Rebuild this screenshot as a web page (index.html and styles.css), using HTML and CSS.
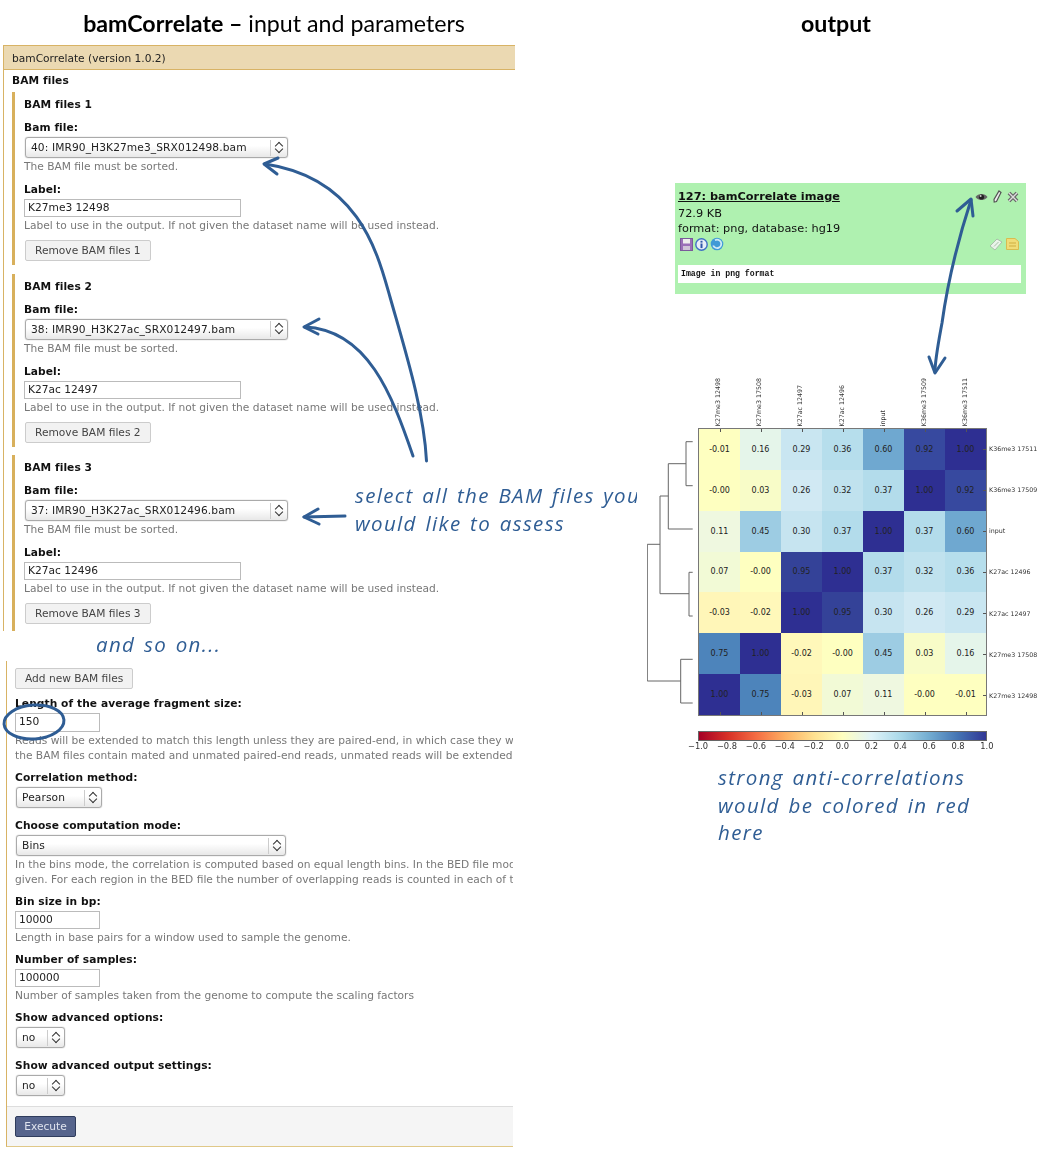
FILE: index.html
```html
<!DOCTYPE html>
<html lang="en">
<head>
  <meta charset="UTF-8">
  <title>bamCorrelate</title>
  <link rel="stylesheet" href="styles.css">
</head>
<body>
<div class="page">

  <div class="left">
    <h1 class="title"><b>bamCorrelate –</b> input and parameters</h1>

    <div class="panel panel-top">
      <div class="panel-head">bamCorrelate (version 1.0.2)</div>
      <div class="section-title">BAM files</div>

      <div class="repeat">
        <div class="repeat-title">BAM files 1</div>
        <label>Bam file:</label>
        <div class="select wide"><span>40: IMR90_H3K27me3_SRX012498.bam</span><i class="spin"></i></div>
        <div class="help">The BAM file must be sorted.</div>
        <label>Label:</label>
        <div class="textbox long">K27me3 12498</div>
        <div class="help">Label to use in the output. If not given the dataset name will be used instead.</div>
        <div class="btn">Remove BAM files 1</div>
      </div>

      <div class="repeat">
        <div class="repeat-title">BAM files 2</div>
        <label>Bam file:</label>
        <div class="select wide"><span>38: IMR90_H3K27ac_SRX012497.bam</span><i class="spin"></i></div>
        <div class="help">The BAM file must be sorted.</div>
        <label>Label:</label>
        <div class="textbox long">K27ac 12497</div>
        <div class="help">Label to use in the output. If not given the dataset name will be used instead.</div>
        <div class="btn">Remove BAM files 2</div>
      </div>

      <div class="repeat">
        <div class="repeat-title">BAM files 3</div>
        <label>Bam file:</label>
        <div class="select wide"><span>37: IMR90_H3K27ac_SRX012496.bam</span><i class="spin"></i></div>
        <div class="help">The BAM file must be sorted.</div>
        <label>Label:</label>
        <div class="textbox long">K27ac 12496</div>
        <div class="help">Label to use in the output. If not given the dataset name will be used instead.</div>
        <div class="btn">Remove BAM files 3</div>
      </div>
    </div>

    <div class="note and-so-on">and so on...</div>

    <div class="panel panel-bottom">
      <div class="fields">
        <div class="btn">Add new BAM files</div>

        <label>Length of the average fragment size:</label>
        <div class="textbox short tall">150</div>
        <div class="help">Reads will be extended to match this length unless they are paired-end, in which case they will be extended to match the fragment size.<br>the BAM files contain mated and unmated paired-end reads, unmated reads will be extended to match this length as well as the others.</div>

        <label>Correlation method:</label>
        <div class="select method"><span>Pearson</span><i class="spin"></i></div>

        <label>Choose computation mode:</label>
        <div class="select mode"><span>Bins</span><i class="spin"></i></div>
        <div class="help">In the bins mode, the correlation is computed based on equal length bins. In the BED file mode, regions are<br>given. For each region in the BED file the number of overlapping reads is counted in each of the BAM files given.</div>

        <label>Bin size in bp:</label>
        <div class="textbox short">10000</div>
        <div class="help">Length in base pairs for a window used to sample the genome.</div>

        <label>Number of samples:</label>
        <div class="textbox short">100000</div>
        <div class="help">Number of samples taken from the genome to compute the scaling factors</div>

        <label>Show advanced options:</label>
        <div class="select yesno"><span>no</span><i class="spin"></i></div>

        <label>Show advanced output settings:</label>
        <div class="select yesno"><span>no</span><i class="spin"></i></div>
      </div>
      <div class="panel-foot"><div class="execute">Execute</div></div>
    </div>
  </div>

  <div class="right">
    <h1 class="title"><b>output</b></h1>

    <div class="dataset">
      <div class="ds-top">
        <a class="ds-name">127: bamCorrelate image</a>
        <div class="ds-icons">
          <svg width="13" height="10" viewBox="0 0 13 10"><path d="M0.5 5C3 1 10 1 12.5 5C10 9 3 9 0.5 5Z" fill="#666"/><circle cx="6.5" cy="5" r="2.6" fill="#222"/><circle cx="5.6" cy="4" r="1" fill="#ccc"/></svg>
          <svg width="9" height="13" viewBox="0 0 9 13"><path d="M6 1L8 2.5L3.5 11.5L1.2 12L1 9.5Z" fill="#eee" stroke="#555" stroke-width="1.2"/></svg>
          <svg width="12" height="12" viewBox="0 0 12 12"><path d="M2 2L10 10M10 2L2 10" stroke="#666" stroke-width="3.8"/><path d="M2 2L10 10M10 2L2 10" stroke="#ddd" stroke-width="1.4"/></svg>
        </div>
      </div>
      <div class="ds-line">72.9 KB</div>
      <div class="ds-line">format: png, database: hg19</div>
      <div class="ds-actions">
        <div class="ds-icons tight">
          <svg width="13" height="13" viewBox="0 0 13 13"><rect x="0.5" y="0.5" width="12" height="12" fill="#9a6fb8" stroke="#7a5a9a"/><rect x="3" y="1" width="7" height="4.5" fill="#eee"/><rect x="3" y="8" width="7" height="4" fill="#cfc4d8"/></svg>
          <svg width="13" height="13" viewBox="0 0 13 13"><circle cx="6.5" cy="6.5" r="5.7" fill="#e8eef8" stroke="#3f6fc4" stroke-width="1.4"/><rect x="5.5" y="5.5" width="2" height="4.6" fill="#2f55a8"/><rect x="5.5" y="2.8" width="2" height="1.8" fill="#2f55a8"/></svg>
          <svg width="14" height="14" viewBox="0 0 14 14"><circle cx="7" cy="7" r="6.3" fill="#3f9ad6"/><path d="M5 3.2A4.2 4.2 0 1 1 3.2 8.5" fill="none" stroke="#cfeaf5" stroke-width="1.8"/></svg>
        </div>
        <div class="ds-icons notes">
          <svg width="14" height="13" viewBox="0 0 14 13"><path d="M1 8L8 1L13 4L6 12Z" fill="#eaf4ea" stroke="#a9c0a9"/><path d="M5 8.5L9.5 4" stroke="#a9c0a9"/></svg>
          <svg width="13" height="12" viewBox="0 0 13 12"><path d="M0.5 0.5H9L12.5 3.5V11.5H0.5Z" fill="#f0dc78" stroke="#d8bc50"/><path d="M3 5H10M3 8H10" stroke="#cfae40"/></svg>
        </div>
      </div>
      <div class="ds-peek">Image in png format</div>
    </div>

    <div class="plot">
      <div class="col-labels">
        <span>K27me3 12498</span><span>K27me3 17508</span><span>K27ac 12497</span><span>K27ac 12496</span><span>input</span><span>K36me3 17509</span><span>K36me3 17511</span>
      </div>
      <div class="plot-row">
        <svg class="dendro" width="51" height="288" viewBox="647 428 51 288">
          <path d="M692.7 441.7H686V485.7H692.7M686 463.7H668.3V529H692.7M668.3 496H660V593.7M692.7 572.3H689V616H692.7M689 593.7H660M660 544.3H647.3V681H680.7M692.7 659.3H680.7V703H692.7" fill="none" stroke="#666" stroke-width="1"/>
        </svg>
        <div class="heatmap">
          <div class="c v-01">-0.01</div><div class="c v16">0.16</div><div class="c v29">0.29</div><div class="c v36">0.36</div><div class="c v60">0.60</div><div class="c v92">0.92</div><div class="c v100">1.00</div>
          <div class="c v00">-0.00</div><div class="c v03">0.03</div><div class="c v26">0.26</div><div class="c v32">0.32</div><div class="c v37">0.37</div><div class="c v100">1.00</div><div class="c v92">0.92</div>
          <div class="c v11">0.11</div><div class="c v45">0.45</div><div class="c v30">0.30</div><div class="c v37">0.37</div><div class="c v100">1.00</div><div class="c v37">0.37</div><div class="c v60">0.60</div>
          <div class="c v07">0.07</div><div class="c v00">-0.00</div><div class="c v95">0.95</div><div class="c v100">1.00</div><div class="c v37">0.37</div><div class="c v32">0.32</div><div class="c v36">0.36</div>
          <div class="c v-03">-0.03</div><div class="c v-02">-0.02</div><div class="c v100">1.00</div><div class="c v95">0.95</div><div class="c v30">0.30</div><div class="c v26">0.26</div><div class="c v29">0.29</div>
          <div class="c v75">0.75</div><div class="c v100">1.00</div><div class="c v-02">-0.02</div><div class="c v00">-0.00</div><div class="c v45">0.45</div><div class="c v03">0.03</div><div class="c v16">0.16</div>
          <div class="c v100">1.00</div><div class="c v75">0.75</div><div class="c v-03">-0.03</div><div class="c v07">0.07</div><div class="c v11">0.11</div><div class="c v00">-0.00</div><div class="c v-01">-0.01</div>
        </div>
        <div class="row-labels">
          <span>K36me3 17511</span><span>K36me3 17509</span><span>input</span><span>K27ac 12496</span><span>K27ac 12497</span><span>K27me3 17508</span><span>K27me3 12498</span>
        </div>
      </div>
      <div class="colorbar"></div>
      <div class="scale">
        <span>−1.0</span><span>−0.8</span><span>−0.6</span><span>−0.4</span><span>−0.2</span><span>0.0</span><span>0.2</span><span>0.4</span><span>0.6</span><span>0.8</span><span>1.0</span>
      </div>
    </div>

    <div class="note red-note">strong anti-correlations<br>would be colored in red<br>here</div>
  </div>

  <div class="note select-note">select all the BAM files you<br>would like to assess</div>

  <svg class="arrows" width="1053" height="1152" viewBox="0 0 1053 1152">
    <g fill="none" stroke="#2f5d94" stroke-width="3" stroke-linecap="round" stroke-linejoin="round">
      <path d="M426.5 461C424 410 405 350 390 297C378 255 360 178 265 164"/>
      <path d="M278 158L264 164L277 174"/>
      <path d="M413 456C392 395 368 330 305 327"/>
      <path d="M319 319L304 327L318 334"/>
      <path d="M345 516L304 517"/>
      <path d="M318 509L304 517L319 524"/>
      <path d="M971 200C958 240 948 280 942 323C938 345 935 360 935 372"/>
      <path d="M957 211L971 199L973 216"/>
      <path d="M929 357L935 373L945 358"/>
      <ellipse cx="34" cy="722" rx="30" ry="17" transform="rotate(-4 34 722)"/>
    </g>
  </svg>
</div>
</body>
</html>
```

FILE: styles.css
```css
* {
  box-sizing: border-box;
}
body {
  margin: 0;
  background-color: #fff;
  color: #111;
  font-family: "DejaVu Sans", sans-serif;
  font-size: 10.65px;
}
.page {
  position: relative;
  width: 1053px;
  height: 1152px;
  overflow: hidden;
  display: flex;
  filter: blur(0.3px);
}
.title {
  margin: 0;
  height: 45px;
  padding-top: 9px;
  text-align: center;
  font-family: Lato, "Open Sans", sans-serif;
  font-size: 23.2px;
  line-height: 28px;
  font-weight: 400;
  color: #000;
}
.left {
  width: 512px;
  margin-left: 3px;
  flex: none;
}
.right {
  width: 400px;
  margin-left: 121px;
  flex: none;
}
.left .title {
  padding-left: 30px;
}

/* tool form */
.panel {
  overflow: hidden;
  white-space: nowrap;
  border-left: 1px solid #d8b365;
}
.panel-top {
  height: 586px;
  border-top: 1px solid #d8b365;
}
.panel-head {
  height: 24px;
  padding: 6px 8px 0;
  background-color: #ebd9b2;
  border-bottom: 1px solid #d8b365;
  color: #222;
}
.section-title {
  height: 22px;
  padding: 4px 8px 0;
  line-height: 13px;
  font-weight: bold;
  letter-spacing: 0.08px;
}
.repeat {
  height: 173px;
  margin-left: 8px;
  margin-bottom: 8.5px;
  padding: 6px 0 0 9px;
  border-left: 3px solid #d8b05c;
}
.repeat:last-child {
  height: 176px;
  margin-bottom: 0;
}
.repeat-title {
  height: 13px;
  margin-bottom: 10px;
  line-height: 13px;
  font-weight: bold;
  letter-spacing: 0.08px;
}
label {
  display: block;
  font-weight: bold;
  line-height: 13px;
  margin-bottom: 3px;
  letter-spacing: 0.08px;
}
.select {
  display: flex;
  align-items: center;
  justify-content: space-between;
  height: 21px;
  padding-left: 5px;
  background: linear-gradient(#fff, #fff 40%, #e8e8e8);
  border: 1px solid #aaa;
  border-radius: 3px;
  box-shadow: 0 0 1px #888;
}
.select span {
  color: #222;
  letter-spacing: 0.1px;
}
.spin {
  position: relative;
  width: 17px;
  height: 16px;
  flex: none;
  border-left: 1px solid #ccc;
}
.spin::before,
.spin::after {
  content: "";
  position: absolute;
  left: 5px;
  width: 5px;
  height: 5px;
  border: solid #333;
  border-width: 1px 0 0 1px;
}
.spin::before {
  top: 3px;
  transform: rotate(45deg);
}
.spin::after {
  top: 6px;
  transform: rotate(225deg);
}
.wide {
  width: 263px;
  margin-left: 1px;
}
.method {
  width: 86px;
  margin-left: 1px;
}
.mode {
  width: 270px;
  margin-left: 1px;
}
.yesno {
  width: 49px;
  margin-left: 1px;
}
.help {
  margin-top: 1px;
  margin-bottom: 9px;
  color: #777;
  line-height: 15px;
}
.textbox {
  height: 18px;
  padding-left: 3px;
  line-height: 16px;
  border: 1px solid #bbb;
  color: #222;
}
.tall {
  height: 19px;
}
.long {
  width: 217px;
}
.short {
  width: 85px;
}
.btn {
  display: inline-block;
  height: 21px;
  padding: 0 9px;
  line-height: 19px;
  background-color: #f2f2f2;
  border: 1px solid #ccc;
  border-radius: 2px;
  color: #444;
}
.repeat .btn {
  display: block;
  width: fit-content;
  margin-top: -2px;
  margin-left: 1px;
}
.panel-bottom {
  width: 507px;
  height: 486px;
  margin-left: 3px;
  border-bottom: 1px solid #e0c888;
}
.fields {
  height: 445px;
  padding: 7px 8px 0;
}
.fields label {
  margin-top: 8px;
}
.fields .select + label {
  margin-top: 11px;
}
.fields .help {
  margin-bottom: 8px;
}
.fields .help + label {
  margin-top: 0;
}
.panel-foot {
  height: 40px;
  padding-top: 9px;
  padding-left: 8px;
  background-color: #f5f5f5;
  border-top: 1px solid #ddd;
}
.execute {
  width: 61px;
  height: 21px;
  text-align: center;
  line-height: 19px;
  color: #dfe3ee;
  background-color: #56648c;
  border: 1px solid #2f3c5c;
  border-radius: 2px;
}

/* handwritten notes */
.note {
  font-family: "Open Sans", sans-serif;
  font-style: italic;
  font-weight: 400;
  font-size: 20.5px;
  letter-spacing: 1.35px;
  word-spacing: 2px;
  color: #2f5d94;
  white-space: nowrap;
}
.and-so-on {
  height: 30px;
  padding: 0 0 0 93px;
  line-height: 27px;
}
.select-note {
  position: absolute;
  left: 355px;
  top: 481px;
  width: 282px;
  overflow: hidden;
  line-height: 28px;
}
.red-note {
  margin: -5px 0 0 82px;
  line-height: 27.5px;
}

/* dataset box */
.dataset {
  width: 351px;
  height: 111px;
  margin-top: 138px;
  margin-left: 39px;
  padding: 6px 5px 0 3px;
  background-color: #aff1b0;
  font-size: 11.3px;
  line-height: 15px;
}
.ds-top,
.ds-actions {
  display: flex;
  justify-content: space-between;
  align-items: center;
}
.ds-top {
  margin-bottom: 2px;
}
.ds-name {
  font-weight: bold;
  text-decoration: underline;
  color: #111;
}
.ds-icons {
  display: flex;
  align-items: center;
  gap: 5px;
  padding-right: 2px;
}
.ds-icons.tight {
  gap: 2px;
  padding: 0 0 0 2px;
}
.ds-icons.notes {
  gap: 3px;
}
.ds-actions {
  height: 16px;
}
.ds-peek {
  margin-top: 13px;
  height: 18px;
  width: 343px;
  padding-left: 3px;
  background-color: #fff;
  font-family: "Liberation Mono", monospace;
  font-size: 8.2px;
  font-weight: bold;
  line-height: 17px;
}

/* heatmap */
.plot {
  margin-top: 80px;
  margin-left: 11px;
  width: 400px;
}
.col-labels {
  display: grid;
  grid-template-columns: repeat(7, 41.2px);
  height: 54px;
  margin-left: 50px;
  font-size: 6.3px;
  color: #333;
}
.col-labels span {
  justify-self: center;
  align-self: end;
  writing-mode: vertical-rl;
  transform: rotate(180deg);
  padding-top: 2px;
  white-space: nowrap;
}
.plot-row {
  display: flex;
}
.dendro {
  flex: none;
}
.heatmap {
  width: 289px;
  height: 288px;
  flex: none;
  display: grid;
  grid-template-columns: repeat(7, 1fr);
  grid-template-rows: repeat(7, 1fr);
  border: 1px solid #777;
}
.c {
  position: relative;
  display: flex;
  align-items: center;
  justify-content: center;
  font-size: 8px;
  color: #222;
}
.c:nth-child(-n+7)::before,
.c:nth-last-child(-n+7)::after {
  content: "";
  position: absolute;
  left: 50%;
  width: 1px;
  height: 3px;
  background-color: #555;
}
.c:nth-child(-n+7)::before {
  top: 0;
}
.c:nth-last-child(-n+7)::after {
  bottom: 0;
}
.v-03 { background-color: #fff6b8; }
.v-02 { background-color: #fff8ba; }
.v-01 { background-color: #feffc0; }
.v00 { background-color: #feffc0; }
.v03 { background-color: #f8fcc8; }
.v07 { background-color: #f2fad6; }
.v11 { background-color: #eff8e0; }
.v16 { background-color: #e5f5ea; }
.v26 { background-color: #d1e9f3; }
.v29 { background-color: #c9e6f1; }
.v30 { background-color: #c6e4f0; }
.v32 { background-color: #c0e2ee; }
.v36 { background-color: #b6deec; }
.v37 { background-color: #b3dceb; }
.v45 { background-color: #9dcce3; }
.v60 { background-color: #6fa8d0; }
.v75 { background-color: #4d84bb; }
.v92 { background-color: #37499f; }
.v95 { background-color: #344298; }
.v100 { background-color: #2e2f92; }
.row-labels {
  display: grid;
  grid-template-rows: repeat(7, 1fr);
  height: 288px;
  padding-left: 2px;
  font-size: 6.3px;
  color: #333;
  white-space: nowrap;
}
.row-labels span {
  position: relative;
  align-self: center;
}
.row-labels span::before {
  content: "";
  position: absolute;
  left: -6px;
  top: 50%;
  width: 3px;
  height: 1px;
  background-color: #555;
}
.colorbar {
  width: 289px;
  height: 10px;
  margin: 15px 0 0 51px;
  border: 1px solid #666;
  background: linear-gradient(to right, #a50026, #d73027 10%, #f46d43 20%, #fdae61 30%, #fee090 40%, #ffffbf 50%, #e0f3f8 60%, #abd9e9 70%, #74add1 80%, #4575b4 90%, #313695);
}
.scale {
  display: flex;
  justify-content: space-between;
  width: 309px;
  margin: 0 0 18px 41px;
  font-size: 8.3px;
  line-height: 10px;
  color: #333;
}
.scale span {
  width: 20px;
  text-align: center;
}

.arrows {
  position: absolute;
  left: 0;
  top: 0;
  pointer-events: none;
}
```
